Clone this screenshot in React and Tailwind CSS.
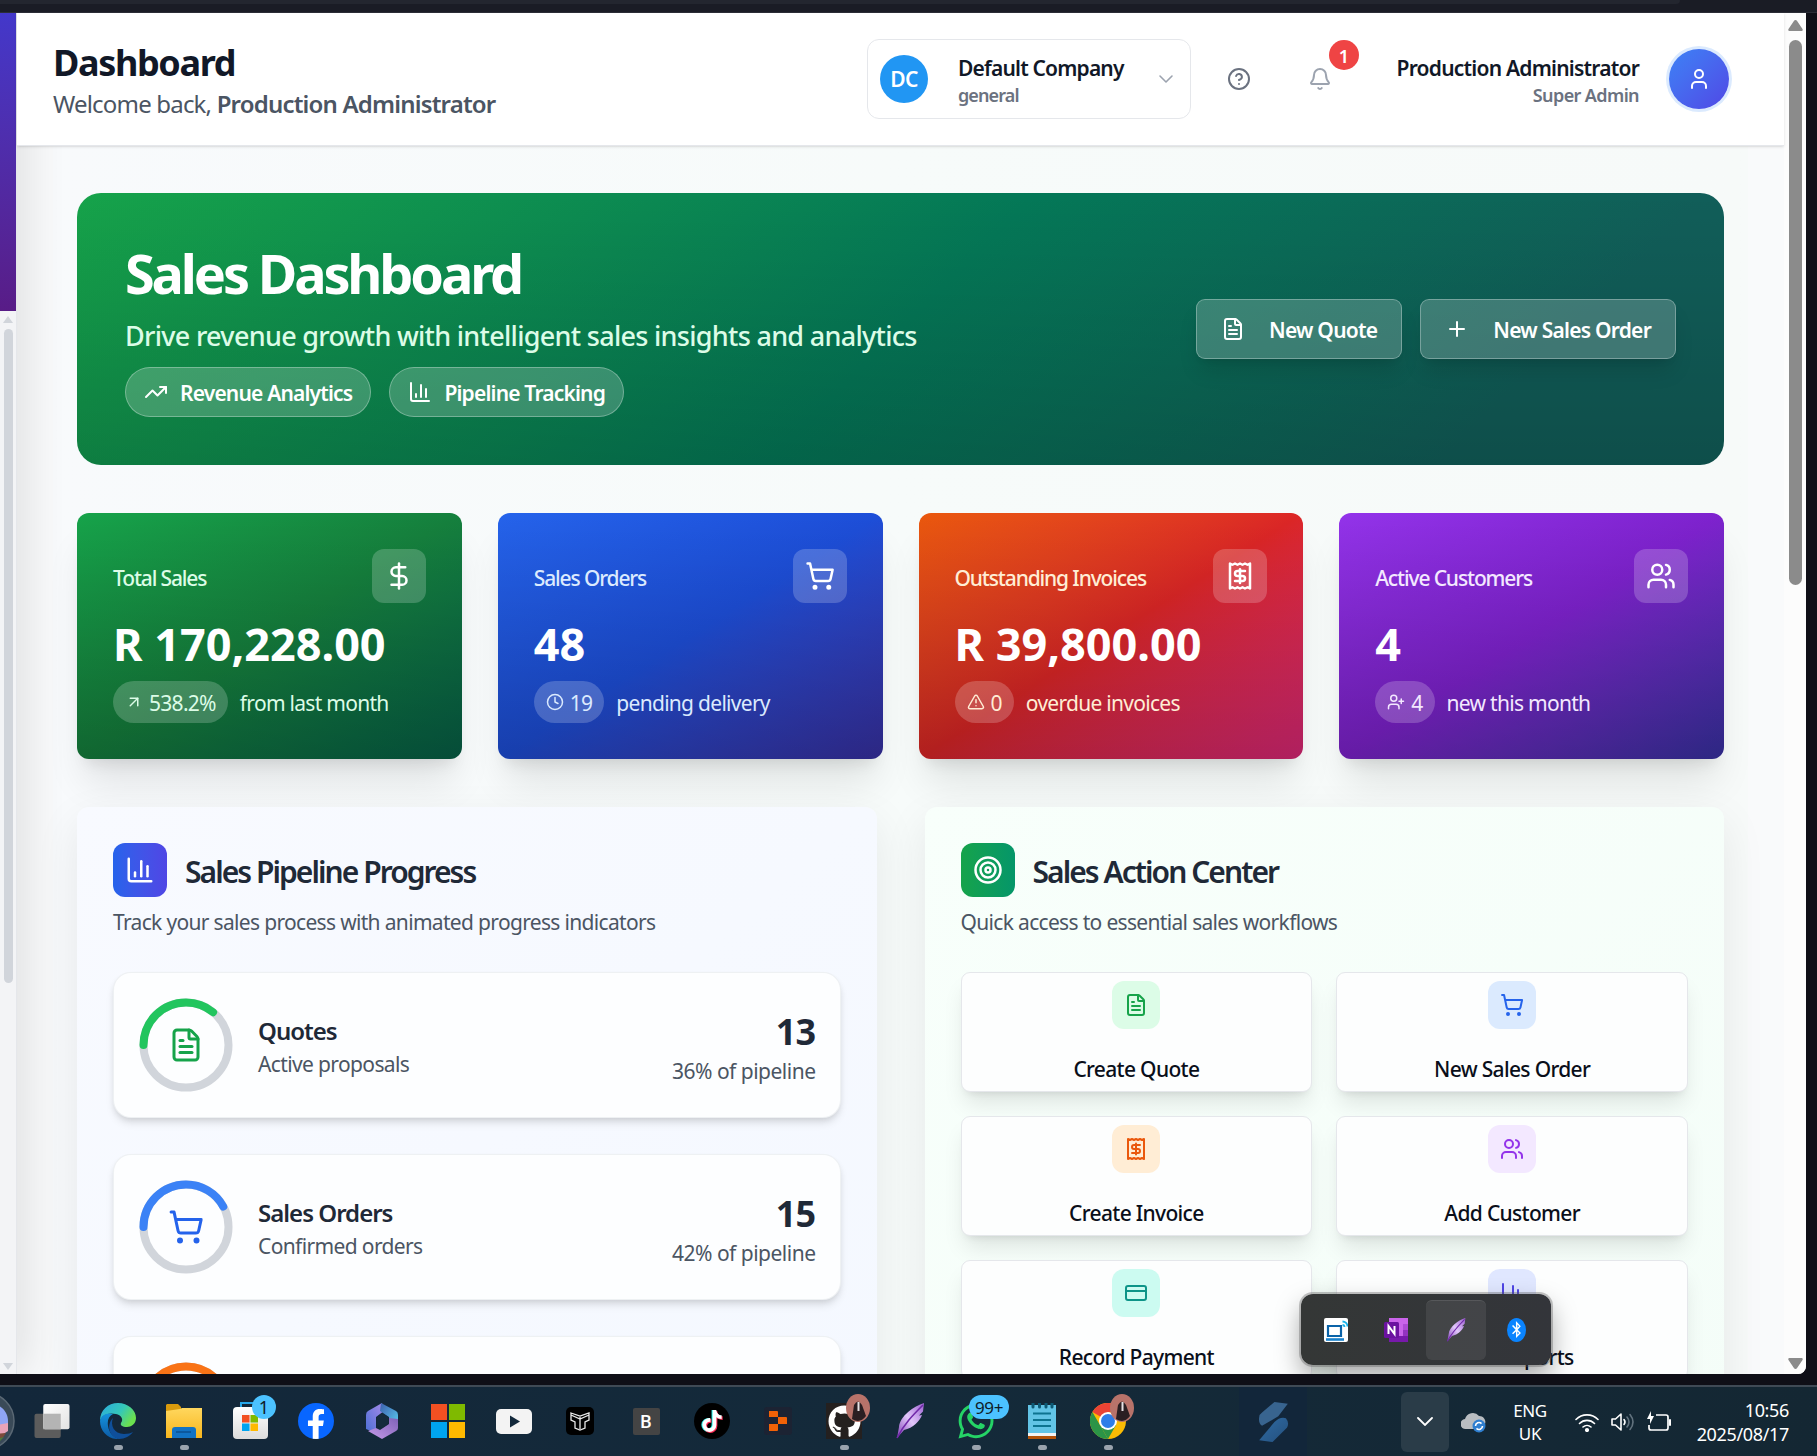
import React from "react";
import {
  TrendingUp, BarChart3, FileText, Plus, DollarSign, ShoppingCart, Receipt, Users, UserPlus,
  TriangleAlert, Clock, ArrowUpRight, Target, CreditCard, HelpCircle, Bell, User, ChevronDown,
} from "lucide-react";
import { FaFacebookF, FaTiktok, FaGithub, FaWhatsapp, FaBluetoothB } from "react-icons/fa";

function Header() {
  return (
    <header className="relative z-20 flex h-[133px] shrink-0 items-center justify-between border-b border-gray-200 bg-white pr-[55px] pl-[36px] shadow-sm">
      <div className="pt-[5px]">
        <h1 className="text-[36px] leading-[45px] font-bold tracking-[-0.038em] text-[#111827]">Dashboard</h1>
        <p className="text-[24px] leading-[38px] tracking-[-0.034em] text-[#4b5563]">
          Welcome back, <span className="font-semibold tracking-[-0.034em]">Production Administrator</span>
        </p>
      </div>
      <div className="flex items-center">
        <div className="flex h-[80px] w-[324px] items-center rounded-xl border border-gray-200 pr-[12px] pl-[12px]">
          <div className="flex size-[48px] items-center justify-center rounded-full bg-[#2196f3] pt-[2px] text-[21px] font-semibold tracking-[-0.03em] text-white">DC</div>
          <div className="ml-[30px] pt-[4px]">
            <div className="text-[21px] leading-[27px] font-semibold tracking-[-0.039em] text-[#111827]">Default Company</div>
            <div className="text-[18px] leading-[26px] font-semibold tracking-[-0.05em] text-[#6b7280]">general</div>
          </div>
          <ChevronDown className="ml-auto size-[24px] text-[#9ca3af]" strokeWidth={1.6} />
        </div>
        <HelpCircle className="ml-[36px] size-[24px] text-[#6b7280]" />
        <div className="relative ml-[57px]">
          <Bell className="size-[24px] text-[#9ca3af]" />
          <span className="absolute -top-[27px] left-[21px] flex size-[30px] items-center justify-center rounded-full bg-[#ef4444] pt-px text-[18px] leading-none font-semibold text-white">1</span>
        </div>
        <div className="ml-[64px] w-[243px] pt-[4px] text-right whitespace-nowrap">
          <div className="text-[21px] leading-[27px] font-semibold tracking-[-0.037em] text-[#111827]">Production Administrator</div>
          <div className="text-[18px] leading-[26px] font-semibold tracking-[-0.034em] text-[#6b7280]">Super Admin</div>
        </div>
        <div className="ml-[30px] flex size-[60px] items-center justify-center rounded-full bg-linear-to-br from-[#3b82f6] to-[#4f46e5] text-white ring-3 ring-[#dbeafe]">
          <User className="size-[24px]" />
        </div>
      </div>
    </header>
  );
}

function HeroPill({ icon: Icon, label }) {
  return (
    <span className="flex h-[50px] items-center gap-[12px] rounded-full border border-white/30 bg-white/20 px-[18px] text-[21px] font-semibold tracking-[-0.039em] text-white">
      <Icon className="size-[24px]" />
      <span className="pt-[4px]">{label}</span>
    </span>
  );
}

function HeroButton({ icon: Icon, label, iconClass }) {
  return (
    <button className="flex h-[60px] items-center rounded-[9px] border border-white/30 bg-white/20 px-[24px] text-[21px] font-semibold tracking-[-0.036em] text-white shadow-[0_15px_22px_-4px_rgba(0,0,0,0.12),0_6px_9px_-6px_rgba(0,0,0,0.12)]">
      <Icon className={iconClass} />
      <span className="ml-[24px] pt-[4px]">{label}</span>
    </button>
  );
}

function Hero() {
  return (
    <section className="h-[272px] rounded-[24px] bg-[linear-gradient(to_bottom,rgba(0,0,0,0),rgba(0,0,0,0.17)),linear-gradient(135deg,#16a34a_0%,#047857_50%,#115e59_85%,#115e59_100%)]">
      <div className="flex h-full items-start justify-between px-[48px] pt-[44px]">
        <div>
          <h2 className="text-[54px] leading-[72px] font-bold tracking-[-0.058em] text-white">Sales Dashboard</h2>
          <p className="mt-[6px] text-[27px] leading-[42px] font-medium tracking-[-0.0262em] text-[#dcfce7]">
            Drive revenue growth with intelligent sales insights and analytics
          </p>
          <div className="mt-[10px] flex gap-[18px]">
            <HeroPill icon={TrendingUp} label="Revenue Analytics" />
            <HeroPill icon={BarChart3} label="Pipeline Tracking" />
          </div>
        </div>
        <div className="mt-[62px] flex gap-[18px]">
          <HeroButton icon={FileText} label="New Quote" iconClass="size-[24px]" />
          <HeroButton icon={Plus} label="New Sales Order" iconClass="size-[24px]" />
        </div>
      </div>
    </section>
  );
}

const stats = [
  { label: "Total Sales", value: "R 170,228.00", icon: DollarSign, chipIcon: ArrowUpRight, chip: "538.2%", note: "from last month",
    bg: "bg-linear-to-br from-[#16a34a] via-[#15803d] to-[#065f46]", fg: "text-[#dcfce7]" },
  { label: "Sales Orders", value: "48", icon: ShoppingCart, chipIcon: Clock, chip: "19", note: "pending delivery",
    bg: "bg-linear-to-br from-[#2563eb] via-[#1d4ed8] to-[#3730a3]", fg: "text-[#dbeafe]" },
  { label: "Outstanding Invoices", value: "R 39,800.00", icon: Receipt, chipIcon: TriangleAlert, chip: "0", note: "overdue invoices",
    bg: "bg-linear-to-br from-[#ea580c] via-[#dc2626] to-[#db2777]", fg: "text-[#ffedd5]" },
  { label: "Active Customers", value: "4", icon: Users, chipIcon: UserPlus, chip: "4", note: "new this month",
    bg: "bg-linear-to-br from-[#9333ea] via-[#7e22ce] to-[#3730a3]", fg: "text-[#f3e8ff]" },
];

function StatCard({ label, value, icon: Icon, chipIcon: ChipIcon, chip, note, bg, fg }) {
  return (
    <article className={`h-[246px] rounded-xl shadow-[0_30px_38px_-8px_rgba(0,0,0,0.1),0_12px_15px_-9px_rgba(0,0,0,0.1)] ${bg}`}>
      <div className="h-full rounded-xl bg-linear-to-b from-black/0 to-black/20 p-[36px]">
        <div className="flex items-center justify-between">
          <span className={`pt-[4px] text-[21px] leading-[30px] font-medium tracking-[-0.054em] ${fg}`}>{label}</span>
          <span className="flex size-[54px] items-center justify-center rounded-xl bg-white/20 text-white">
            <Icon className="size-[30px]" />
          </span>
        </div>
        <div className="mt-[11px] text-[45px] leading-[60px] font-bold text-white">{value}</div>
        <div className={`mt-[7px] flex items-center gap-[12px] text-[21px] leading-[30px] tracking-[-0.034em] ${fg}`}>
          <span className="flex h-[42px] items-center gap-[6px] rounded-full bg-white/20 px-[12px]">
            <ChipIcon className="size-[18px]" />
            <span className="pt-[2px]">{chip}</span>
          </span>
          <span className="pt-[2px]">{note}</span>
        </div>
      </div>
    </article>
  );
}

function PanelHead({ icon: Icon, title, subtitle, iconBg }) {
  return (
    <>
      <div className="flex items-center gap-[18px]">
        <span className={`flex size-[54px] items-center justify-center rounded-xl text-white ${iconBg}`}>
          <Icon className="size-[30px]" />
        </span>
        <h3 className="pt-[3px] text-[30px] leading-[42px] font-semibold tracking-[-0.065em] text-[#1f2937]">{title}</h3>
      </div>
      <p className="mt-[10px] text-[21px] leading-[30px] tracking-[-0.032em] text-[#4b5563]">{subtitle}</p>
    </>
  );
}

const stages = [
  { title: "Quotes", sub: "Active proposals", count: "13", pct: 36, icon: FileText, stroke: "#22c55e", fg: "text-[#16a34a]" },
  { title: "Sales Orders", sub: "Confirmed orders", count: "15", pct: 42, icon: ShoppingCart, stroke: "#3b82f6", fg: "text-[#2563eb]" },
  { pct: 60, icon: Receipt, stroke: "#f97316", fg: "text-[#ea580c]" },
];

function Stage({ title, sub, count, pct, icon: Icon, stroke, fg }) {
  return (
    <div className="flex h-[146px] items-center rounded-[18px] border border-gray-200/60 bg-[#fdfeff] px-[24px] shadow-[0_6px_9px_-1px_rgba(0,0,0,0.1),0_3px_6px_-2px_rgba(0,0,0,0.1)]">
      <div className="relative size-[96px]">
        <svg viewBox="0 0 96 96" className="size-full -rotate-180" fill="none">
          <circle cx="48" cy="48" r="42.5" stroke="#d1d5db" strokeWidth="8" />
          <circle cx="48" cy="48" r="42.5" stroke={stroke} strokeWidth="8" strokeLinecap="round" pathLength="100" strokeDasharray={`${pct} 100`} />
        </svg>
        <span className={`absolute inset-0 flex items-center justify-center ${fg}`}>
          <Icon className="size-[36px]" />
        </span>
      </div>
      {title && (
        <>
          <div className="ml-[24px] pt-[2px]">
            <div className="text-[24px] leading-[36px] font-semibold tracking-[-0.041em] text-[#1f2937]">{title}</div>
            <div className="text-[21px] leading-[30px] tracking-[-0.03em] text-[#4b5563]">{sub}</div>
          </div>
          <div className="ml-auto pt-[3px] text-right">
            <div className="text-[36px] leading-[48px] font-bold tracking-[-0.02em] text-[#1f2937]">{count}</div>
            <div className="text-[21px] leading-[30px] tracking-[-0.024em] text-[#4b5563]">{pct}% of pipeline</div>
          </div>
        </>
      )}
    </div>
  );
}

const actions = [
  { label: "Create Quote", icon: FileText, tone: "bg-[#dcfce7] text-[#16a34a]" },
  { label: "New Sales Order", icon: ShoppingCart, tone: "bg-[#dbeafe] text-[#2563eb]" },
  { label: "Create Invoice", icon: Receipt, tone: "bg-[#ffedd5] text-[#ea580c]" },
  { label: "Add Customer", icon: Users, tone: "bg-[#f3e8ff] text-[#9333ea]" },
  { label: "Record Payment", icon: CreditCard, tone: "bg-[#ccfbf1] text-[#0d9488]" },
  { label: "View Reports", icon: BarChart3, tone: "bg-[#e0e7ff] text-[#4f46e5]" },
];

function Action({ label, icon: Icon, tone }) {
  return (
    <button className="flex h-[120px] flex-col items-center rounded-[9px] border border-gray-200 bg-[#fdfefe] pt-[8px] shadow-[0_15px_22px_-4px_rgba(0,0,0,0.1),0_6px_9px_-6px_rgba(0,0,0,0.12)]">
      <span className={`flex size-[48px] items-center justify-center rounded-xl ${tone}`}>
        <Icon className="size-[24px]" />
      </span>
      <span className="mt-[25px] text-[21px] leading-[30px] font-medium tracking-[-0.032em] text-[#0a0f1a]">{label}</span>
    </button>
  );
}

function Sidebar() {
  return (
    <aside className="relative z-10 flex w-[17px] shrink-0 flex-col border-r border-gray-200 bg-[#f3f4f6] shadow-[0_0_45px_rgba(0,0,0,0.24)]">
      <div className="h-[298px] bg-linear-to-b from-[#4338ca] to-[#581c87]" />
      <div className="flex flex-1 flex-col items-center">
        <svg viewBox="0 0 10 7" className="mt-[5px] h-[7px] w-[10px]" fill="#d1d5db"><path d="M5 0 10 7H0z" /></svg>
        <div className="mt-[6px] h-[654px] w-[9px] rounded-full bg-[#d1d5db]" />
        <svg viewBox="0 0 10 7" className="mt-auto mb-[4px] h-[7px] w-[10px]" fill="#d1d5db"><path d="M0 0h10L5 7z" /></svg>
      </div>
    </aside>
  );
}

function Scrollbar() {
  return (
    <div className="flex w-[22px] shrink-0 flex-col items-center bg-[#fcfcfc]">
      <svg viewBox="0 0 15 11" className="mt-[7px] h-[11px] w-[15px]" fill="#8b8b8b"><path d="M7.5 0q1 0 1.6 1L14.5 9q.8 2-1 2h-12q-1.800 0-1-2L5.900 1Q6.500 0 7.500 0z" /></svg>
      <div className="mt-[9px] h-[545px] w-[13px] rounded-full bg-[#8b8b8b]" />
      <svg viewBox="0 0 15 11" className="mt-auto mb-[5px] h-[11px] w-[15px]" fill="#8b8b8b"><path d="M7.500 11q-1 0-1.600-1L.5 2q-.8-2 1-2h12q1.800 0 1 2L9.100 10q-.6 1-1.600 1z" /></svg>
    </div>
  );
}

function Feather({ className }) {
  return (
    <svg viewBox="0 0 36 36" className={className}>
      <defs>
        <linearGradient id="quill" x1="1" y1="0" x2="0" y2="1">
          <stop offset="0" stopColor="#9b5fd0" /><stop offset=".5" stopColor="#e2c8fb" /><stop offset="1" stopColor="#7e3fb5" />
        </linearGradient>
      </defs>
      <path d="M32 0C22 3 8 13 7 24l-2 11 7-8c9-2 16-9 18-15l-3 .5 4-4z" fill="url(#quill)" />
      <path d="M31 2C21 12 12 21 5 35" stroke="#7028a8" strokeWidth="1.600" fill="none" />
    </svg>
  );
}

function TrayFlyout() {
  return (
    <div className="absolute top-[1281px] left-[1301px] z-30 flex h-[71px] w-[250px] items-center rounded-xl bg-linear-to-r from-[#343736] to-[#33353a] px-[5px] shadow-[0_0_0_2px_rgba(90,90,90,0.35),0_12px_26px_rgba(0,0,0,0.35)]">
      <div className="flex size-[60px] items-center justify-center">
        <svg viewBox="0 0 24 24" className="size-[24px]">
          <rect width="24" height="24" rx="2" fill="#fff" />
          <path d="M4 8h13v10H4z" fill="none" stroke="#0a63a8" strokeWidth="2.200" />
          <path d="M2 21.500h18" stroke="#1b82cc" strokeWidth="2.600" />
          <path d="M18.500 7a2 2 0 0 1 2 2M18.500 3.500a5 5 0 0 1 5 5" fill="none" stroke="#19b3ea" strokeWidth="1.800" />
        </svg>
      </div>
      <div className="flex size-[60px] items-center justify-center">
        <svg viewBox="0 0 24 24" className="size-[24px]">
          <path d="M5 0h19v24H5z" fill="#ca64ea" /><path d="M19 6h5v6h-5z" fill="#ae4bd5" /><path d="M19 12h5v6h-5z" fill="#9332bf" /><path d="M5 18h19v6H5z" fill="#7719aa" />
          <rect y="4" width="15" height="16" rx="1.500" fill="#6b12a0" />
          <path d="M4.500 16V8l6 8V8" fill="none" stroke="#fff" strokeWidth="2" />
        </svg>
      </div>
      <div className="flex size-[60px] items-center justify-center rounded-md border-t border-white/10 bg-white/8">
        <Feather className="size-[24px]" />
      </div>
      <div className="flex size-[60px] items-center justify-center">
        <span className="flex h-[24px] w-[19px] items-center justify-center rounded-[50%] bg-[#0a84ff] text-white">
          <FaBluetoothB className="size-[17px]" />
        </span>
      </div>
    </div>
  );
}

function Photo() {
  return (
    <svg viewBox="0 0 24 28" className="absolute -top-[9px] left-[20px] h-[28px] w-[24px]">
      <ellipse cx="12" cy="14" rx="12" ry="14" fill="#b8736a" />
      <path d="M8 11q4-7 8 0l4 11q-6 8-14 3z" fill="#2a1f22" />
      <path d="M11.500 8h2v9h-2z" fill="#e6e2e4" />
    </svg>
  );
}

function TaskItem({ children, running }) {
  return (
    <div className="flex h-[69px] w-[66px] shrink-0 flex-col items-center pt-[16px]">
      <div className="relative flex size-[36px] items-center justify-center">{children}</div>
      {running && <span className="mt-[6px] h-[5px] w-[9px] rounded-full bg-[#9aa3ad]" />}
    </div>
  );
}

function MsLogo({ className }) {
  return (
    <svg viewBox="0 0 34 34" className={className}>
      <path d="M0 0h16v16H0z" fill="#f25022" /><path d="M18 0h16v16H18z" fill="#7fba00" />
      <path d="M0 18h16v16H0z" fill="#00a4ef" /><path d="M18 18h16v16H18z" fill="#ffb900" />
    </svg>
  );
}

function TaskIcons() {
  return (
    <div className="-ml-[47px] flex">
      <TaskItem>
        <svg viewBox="0 0 60 60" className="h-[60px] w-[60px] shrink-0">
          <circle cx="30" cy="30" r="28" fill="#3a4a58" stroke="#5a6874" strokeWidth="1.500" />
          <path d="M30 14c10-4 22 4 22 16v8H30z" fill="#8fa5f5" />
          <path d="M30 36l22-4v8L40 48H30z" fill="#e9a3b8" /><path d="M30 44l20-2q-4 8-12 9h-8z" fill="#7c4a3a" />
          <path d="M40 48l8-2-6 6z" fill="#4f7a3a" />
        </svg>
      </TaskItem>
      <TaskItem>
        <svg viewBox="0 0 36 36" className="h-[35px] w-[36px] shrink-0">
          <defs>
            <linearGradient id="tvw" x1="0" y1="0" x2="1" y2="1"><stop offset="0" stopColor="#fff" /><stop offset="1" stopColor="#e2e2e2" /></linearGradient>
          </defs>
          <rect y="10" width="27" height="25" rx="2" fill="#5c5c5c" />
          <rect x="9" width="27" height="26" rx="2" fill="url(#tvw)" />
          <path d="M9 10h18v16H9z" fill="#b4b4b4" />
        </svg>
      </TaskItem>
      <TaskItem running>
        <svg viewBox="0 0 36 36" className="size-[36px]">
          <defs>
            <linearGradient id="ea" x1="0" y1="0" x2="1" y2=".5"><stop offset="0" stopColor="#2ba9e0" /><stop offset=".6" stopColor="#35c8b8" /><stop offset="1" stopColor="#6be04f" /></linearGradient>
            <linearGradient id="eb" x1="0" y1="0" x2="0" y2="1"><stop offset="0" stopColor="#1593dd" /><stop offset="1" stopColor="#0c59a4" /></linearGradient>
          </defs>
          <path d="M0 18C0 7 8 0 18 0s18 7 18 15c0 6-5 9-9 9-5 0-7-2-6-4 3-4 0-8-5-9C8 9 2 12 0 18z" fill="url(#ea)" />
          <path d="M0 18c1-6 7-9 13-7-4 2-6 6-5 12 1 7 6 12 12 13C9 37 0 29 0 18z" fill="url(#eb)" />
          <path d="M13 15c-3 7 1 16 11 16 4 0 7-1 9-2-3 4-8 7-14 7C9 34 6 22 13 15z" fill="#0f4f9a" />
        </svg>
      </TaskItem>
      <TaskItem running>
        <svg viewBox="0 0 36 34" className="h-[34px] w-[36px]">
          <defs><linearGradient id="fo" x1="0" y1="0" x2="0" y2="1"><stop offset="0" stopColor="#ffd75e" /><stop offset="1" stopColor="#f8b61d" /></linearGradient></defs>
          <path d="M1 0h11l3 3v5H0V1z" fill="#d99a0c" />
          <path d="M0 7l14-2 2-1h20v30H0z" fill="url(#fo)" />
          <path d="M6 34V26q0-3 3-3h18q3 0 3 3v8z" fill="#1273c4" /><path d="M10 28h15" stroke="#0b4f91" strokeWidth="1.500" />
        </svg>
      </TaskItem>
      <TaskItem>
        <div className="flex h-[32px] w-[35px] translate-y-[2px] items-center justify-center rounded-sm bg-linear-to-b from-white to-[#dcdcdc]">
          <MsLogo className="size-[16px]" />
        </div>
        <span className="absolute -top-[1px] left-[8px] h-[5px] w-[18px] border-2 border-b-0 border-[#28a8ea]" />
        <span className="absolute -top-[8px] left-[20px] flex size-[24px] items-center justify-center rounded-full bg-[#4cc2ff] pt-px text-[18px] text-[#0f1c28]">1</span>
      </TaskItem>
      <TaskItem>
        <span className="flex size-[36px] items-end justify-center overflow-hidden rounded-full bg-[#0866ff] text-white"><FaFacebookF className="size-[30px]" /></span>
      </TaskItem>
      <TaskItem>
        <svg viewBox="0 0 32 36" className="h-[36px] w-[32px]">
          <defs>
            <linearGradient id="ma" x1="0" y1="1" x2="1" y2="0"><stop offset="0" stopColor="#4b6fd6" /><stop offset="1" stopColor="#a78be8" /></linearGradient>
            <linearGradient id="mb" x1="0" y1="0" x2="1" y2="1"><stop offset="0" stopColor="#3d5fae" /><stop offset="1" stopColor="#5bd0f0" /></linearGradient>
            <linearGradient id="mc" x1="0" y1="1" x2="1" y2="0"><stop offset="0" stopColor="#c79bea" /><stop offset="1" stopColor="#7f62b8" /></linearGradient>
          </defs>
          <path d="M16 0L2 8Q0 9 0 12v14l10 4V14l8-6z" fill="url(#ma)" />
          <path d="M15 0l15 8q2 1 2 4v12l-9-5v-5l-9-6z" fill="url(#mb)" />
          <path d="M32 16v9q0 2-2 3l-14 8L2 28l8-3 4 2 9-6v-6z" fill="url(#mc)" />
          <path d="M16 10l6 4v7l-6 4-5-3v-8z" fill="#152b3c" />
        </svg>
      </TaskItem>
      <TaskItem><MsLogo className="size-[34px]" /></TaskItem>
      <TaskItem>
        <svg viewBox="0 0 36 25" className="h-[25px] w-[36px]"><rect width="36" height="25" rx="5" fill="#f3f3f3" /><path d="M14 6.500l10 6-10 6z" fill="#12283a" /></svg>
      </TaskItem>
      <TaskItem>
        <svg viewBox="0 0 28 28" className="size-[28px]">
          <rect width="28" height="28" rx="5" fill="#000" />
          <path d="M5 6l9 3 9-3v7l-4 2v6l-5 2-5-2v-6l-4-2zM5 8l9 4 9-4M14 10v12" fill="none" stroke="#e8e8e8" strokeWidth="1.300" />
        </svg>
      </TaskItem>
      <TaskItem>
        <span className="flex size-[27px] items-center justify-center rounded-[2px] bg-[#444] font-['Roboto'] text-[18px] font-medium text-white">B</span>
      </TaskItem>
      <TaskItem>
        <span className="relative flex size-[36px] items-center justify-center rounded-full bg-black">
          <FaTiktok className="absolute top-[7px] left-[6px] size-[22px] text-[#25f4ee]" />
          <FaTiktok className="absolute top-[8px] left-[8px] size-[22px] text-[#fe2c55]" />
          <FaTiktok className="absolute top-[7px] left-[7px] size-[22px] text-white" />
        </span>
      </TaskItem>
      <TaskItem>
        <svg viewBox="0 0 28 28" className="size-[28px]">
          <rect width="28" height="28" rx="3" fill="#1c2333" />
          <path d="M5 4h8q1 0 1 1v5H5zM14 10h8q1 0 1 1v6h-9zM5 17h9v6q0 1-1 1H5z" fill="#f26207" />
        </svg>
      </TaskItem>
      <TaskItem running>
        <span className="flex size-[36px] items-center justify-center bg-[#24201f] text-white"><FaGithub className="size-[33px]" /></span>
        <Photo />
      </TaskItem>
      <TaskItem><Feather className="size-[36px]" /></TaskItem>
      <TaskItem running>
        <FaWhatsapp className="size-[40px] shrink-0 text-[#25d366]" />
        <span className="absolute -top-[8px] left-[11px] flex h-[24px] w-[40px] items-center justify-center rounded-full bg-[#4cc2ff] pt-px text-[17px] tracking-[-0.02em] text-[#0f1c28]">99+</span>
      </TaskItem>
      <TaskItem running>
        <svg viewBox="0 0 28 36" className="h-[36px] w-[28px]">
          <path d="M0 2h28v28H0z" fill="#62c4e6" /><path d="M0 30h28v3H0z" fill="#f3f3f3" /><path d="M0 33h28v3H0z" fill="#b45309" />
          <path d="M5 10.500h18M5 17h18M5 23h18" stroke="#0d7390" strokeWidth="1.800" />
          <path d="M5 0v4M11.500 0v4M18 0v4M24 0v4" stroke="#0d5a75" strokeWidth="3" strokeLinecap="round" />
        </svg>
      </TaskItem>
      <TaskItem running>
        <svg viewBox="0 0 36 36" className="size-[36px]">
          <circle cx="18" cy="18" r="18" fill="#fbbc04" />
          <path d="M18 18L2.400 9A18 18 0 0 1 33.600 9H18z" fill="#ea4335" />
          <path d="M2.400 9l7.800 13.500L18 36A18 18 0 0 1 2.400 9z" fill="#2b9447" />
          <path d="M10.200 22.500L18 36l8-14z" fill="#2b9447" />
          <circle cx="18" cy="18" r="9" fill="#fff" /><circle cx="18" cy="18" r="7" fill="#2f7de9" />
        </svg>
        <Photo />
      </TaskItem>
    </div>
  );
}

function Tray() {
  return (
    <div className="flex h-full items-center pr-[28px] text-white">
      <div className="mr-[94px] flex h-[69px] w-[68px] items-center justify-center bg-[#12263a]">
        <svg viewBox="0 0 32 44" className="h-[42px] w-[31px]">
          <defs><linearGradient id="sw" x1="0" y1="0" x2="1" y2="1"><stop offset="0" stopColor="#2f6ba3" /><stop offset="1" stopColor="#24507e" /></linearGradient></defs>
          <path d="M17 1l14 2-10 13L4 26q-4-3-3-9 0-3 3-5z" fill="#38648f" />
          <path d="M29 18q4 5 1 10L15 43 1 41l16-19q6-6 12-4z" fill="url(#sw)" />
        </svg>
      </div>
      <div className="flex h-[60px] w-[48px] items-center justify-center rounded-md bg-[#2a3c48]">
        <svg viewBox="0 0 16 9" className="h-[9px] w-[16px]" fill="none" stroke="#fff" strokeWidth="1.800" strokeLinecap="round"><path d="M1 1l7 7 7-7" /></svg>
      </div>
      <svg viewBox="0 0 26 22" className="ml-[12px] h-[22px] w-[26px]">
        <path d="M5 18a5 5 0 0 1-1-10 8 8 0 0 1 14-3 6 6 0 0 1 6 8l-4 5z" fill="#b9bdc1" />
        <circle cx="18" cy="15" r="6.500" fill="#2f7fd0" />
        <path d="M14.500 15a3.500 3.500 0 0 1 6-2.400M21.500 15a3.500 3.500 0 0 1-6 2.400" fill="none" stroke="#fff" strokeWidth="1.600" />
      </svg>
      <div className="ml-[25px] w-[36px] pt-px text-center text-[17px] leading-[23px] tracking-[-0.02em]"><div>ENG</div><div>UK</div></div>
      <svg viewBox="0 0 24 20" className="ml-[27px] h-[20px] w-[24px]" fill="none" stroke="#fff" strokeWidth="1.600" strokeLinecap="round">
        <path d="M1 7.500a15.500 15.500 0 0 1 22 0M4.500 11.500a10.500 10.500 0 0 1 15 0M8 15a6 6 0 0 1 8 0" /><circle cx="12" cy="18" r="1.300" fill="#fff" />
      </svg>
      <svg viewBox="0 0 24 20" className="ml-[12px] h-[20px] w-[24px]" fill="none" stroke="#fff" strokeWidth="1.600" strokeLinecap="round" strokeLinejoin="round">
        <path d="M1 7v6h3.500L10 18V2L4.500 7zM13 7.500q2 2.500 0 5" /><path d="M16 5q4 5 0 10M19 2.500q6 7.500 0 15" stroke="#62727e" />
      </svg>
      <svg viewBox="0 0 25 22" className="ml-[11px] h-[22px] w-[25px]" fill="none" stroke="#fff" strokeWidth="1.700" strokeLinejoin="round">
        <path d="M10 4h10q2 0 2 2v11q0 2-2 2H5q-2 0-2-2v-3" /><path d="M24 9v5" strokeWidth="2" strokeLinecap="round" />
        <path d="M5 0L1 8h3v5l4-8H5z" fill="#fff" stroke="none" />
      </svg>
      <div className="ml-[24px] w-[94px] text-right text-[18px] leading-[24px] tracking-[-0.019em]"><div>10:56</div><div>2025/08/17</div></div>
    </div>
  );
}

export default function App() {
  return (
    <div className="flex h-[1456px] w-[1817px] flex-col overflow-hidden bg-[#0f0f17] font-['Noto_Sans','Open_Sans',sans-serif]">
      <div className="h-[13px] shrink-0 border-b border-[#2b2d36] bg-[#1a1c25]">
        <div className="h-[4px] w-[1680px] rounded-br-md bg-[#23262f]" />
      </div>
      <div className="relative flex h-[1361px] w-[1806px] shrink-0 overflow-hidden rounded-br-lg bg-gray-50">
        <Sidebar />
        <div className="flex min-w-0 flex-1 flex-col">
          <Header />
          <main className="flex-1 px-[36px]">
            <div className="h-full bg-linear-to-r from-[#f8fafc] via-[#f7fbfa] to-[#f7faf9] px-[24px] pt-[47px]">
              <Hero />
              <div className="mt-[48px] grid grid-cols-4 gap-[36px]">
                {stats.map((s) => <StatCard key={s.label} {...s} />)}
              </div>
              <div className="mt-[48px] grid grid-cols-2 gap-[48px]">
                <section className="h-[700px] rounded-xl bg-linear-to-br from-[#f8faff] to-[#f4f8ff] p-[36px] shadow-[0_15px_45px_rgba(0,0,0,0.08)]">
                  <PanelHead icon={BarChart3} title="Sales Pipeline Progress" subtitle="Track your sales process with animated progress indicators" iconBg="bg-linear-to-r from-[#2563eb] to-[#4f46e5]" />
                  <div className="mt-[35px] flex flex-col gap-[36px]">
                    {stages.map((s) => <Stage key={s.stroke} {...s} />)}
                  </div>
                </section>
                <section className="h-[700px] rounded-xl bg-linear-to-br from-[#f8fffb] to-[#f4fdf8] p-[36px] shadow-[0_15px_45px_rgba(0,0,0,0.08)]">
                  <PanelHead icon={Target} title="Sales Action Center" subtitle="Quick access to essential sales workflows" iconBg="bg-linear-to-r from-[#16a34a] to-[#059669]" />
                  <div className="mt-[35px] grid grid-cols-2 gap-[24px]">
                    {actions.map((a) => <Action key={a.label} {...a} />)}
                  </div>
                </section>
              </div>
            </div>
          </main>
        </div>
        <Scrollbar />
        <TrayFlyout />
      </div>
      <div className="mt-[11px] flex h-[71px] shrink-0 items-start justify-between border-t-2 border-[#3f4a55] bg-linear-to-r from-[#13273a] via-[#142a3a] to-[#142733]">
        <TaskIcons />
        <Tray />
      </div>
    </div>
  );
}
